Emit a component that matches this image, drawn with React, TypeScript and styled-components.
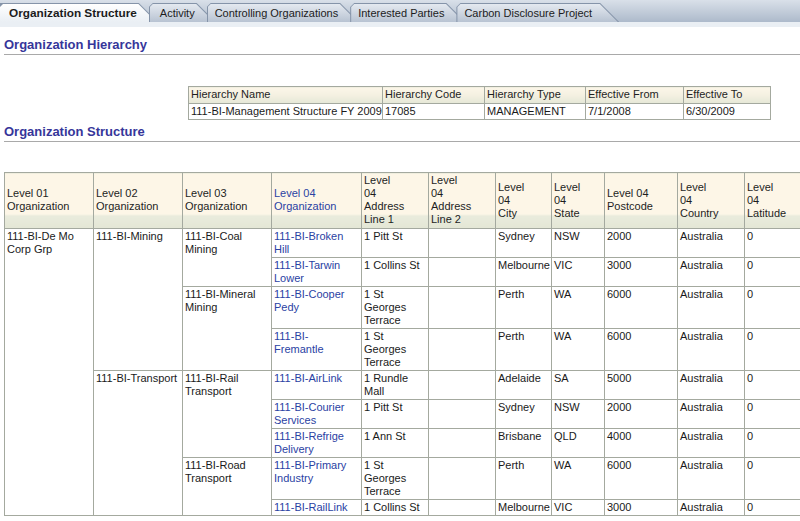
import React from 'react';
import styled, { createGlobalStyle } from 'styled-components';

const GlobalStyle = createGlobalStyle`
  html, body {
    margin: 0;
    padding: 0;
    background: #ffffff;
    overflow: hidden;
  }
  body {
    font-family: "Liberation Sans", Arial, sans-serif;
    font-size: 11px;
    color: #1a1a1a;
  }
`;

const TabBar = styled.div`
  display: flex;
  align-items: flex-end;
  height: 22px;
  padding-top: 3px;
  box-sizing: border-box;
  background: linear-gradient(#d9e0e9, #adbacb);
`;

const TabEdge = styled.div<{ $active?: boolean }>`
  position: relative;
  height: 19px;
  margin-right: -9px;
  padding: 1px 1px 0 ${p => (p.$active ? 0 : 1)}px;
  box-sizing: border-box;
  background: #8594a9;
  clip-path: ${p =>
    p.$active
      ? 'polygon(0 0, calc(100% - 19px) 0, 100% 100%, 0 100%)'
      : 'polygon(0 4px, 4px 0, calc(100% - 19px) 0, 100% 100%, 0 100%)'};
`;

const TabFace = styled.div<{ $active?: boolean; $pad: number; $extra: number }>`
  height: 18px;
  line-height: 18px;
  padding: 0 ${p => 20 + p.$extra}px 0 ${p => p.$pad}px;
  white-space: nowrap;
  font-size: ${p => (p.$active ? '11.8px' : '11px')};
  font-weight: ${p => (p.$active ? 700 : 400)};
  color: #1c1c1c;
  background: ${p =>
    p.$active
      ? 'linear-gradient(#ffffff, #eaeff4)'
      : 'linear-gradient(#e4e9f0, #b8c3d2)'};
  clip-path: polygon(0 3px, 3px 0, calc(100% - 18.4px) 0, calc(100% - 0.4px) 100%, 0 100%);
`;

const TabStrip = styled.div`
  height: 5px;
  background: #eaeff4;
`;

const Content = styled.div`
  padding-left: 4px;
`;

const SectionTitle = styled.h2<{ $top: number }>`
  margin: ${p => p.$top}px 0 0;
  padding: 0 0 2px;
  font-size: 13px;
  line-height: 15px;
  font-weight: bold;
  color: #36369a;
  border-bottom: 1px solid #a9a9a9;
`;

const Table = styled.table<{ $width: number; $left?: number; $top: number }>`
  margin: ${p => p.$top}px 0 0 ${p => p.$left || 0}px;
  width: ${p => p.$width}px;
  border-collapse: collapse;
  table-layout: fixed;
`;

const HeadCell = styled.th<{ $link?: boolean; $short?: boolean }>`
  border: 1px solid #a4a99f;
  padding: 1px 2px 2px;
  text-align: left;
  font-weight: normal;
  vertical-align: middle;
  line-height: 13px;
  white-space: pre;
  overflow: hidden;
  color: ${p => (p.$link ? '#2a42a3' : '#1e1e1e')};
  background: ${p =>
    p.$short
      ? 'linear-gradient(#fcf6e8 0, #f5f1e2 45%, #e5e8d7 100%)'
      : 'linear-gradient(#fdf6e7 0, #fdf6e7 calc(100% - 14px), #eaecdd calc(100% - 13px), #e3e6d5 100%)'};
`;

const Cell = styled.td<{ $link?: boolean }>`
  border: 1px solid #a4a99f;
  padding: 1px 2px;
  vertical-align: top;
  line-height: 13px;
  white-space: pre;
  overflow: hidden;
  color: ${p => (p.$link ? '#2a42a3' : '#1a1a1a')};
`;

const tabs = [
  { label: 'Organization Structure', pad: 9, extra: 0 },
  { label: 'Activity', pad: 10, extra: 0 },
  { label: 'Controlling Organizations', pad: 7, extra: 0 },
  { label: 'Interested Parties', pad: 7, extra: 0 },
  { label: 'Carbon Disclosure Project', pad: 7, extra: 6 },
];

const hierCols = [194, 102, 101, 98, 87];
const hierHead = ['Hierarchy Name', 'Hierarchy Code', 'Hierarchy Type', 'Effective From', 'Effective To'];
const hierRow = ['111-BI-Management Structure FY 2009', '17085', 'MANAGEMENT', '7/1/2008', '6/30/2009'];

const structCols = [89, 89, 89, 90, 67, 67, 56, 53, 73, 67, 72];
const structHead = [
  'Level 01\nOrganization',
  'Level 02\nOrganization',
  'Level 03\nOrganization',
  'Level 04\nOrganization',
  'Level\n04\nAddress\nLine 1',
  'Level\n04\nAddress\nLine 2',
  'Level\n04\nCity',
  'Level\n04\nState',
  'Level 04\nPostcode',
  'Level\n04\nCountry',
  'Level\n04\nLatitude',
];

type Site = { org: string; addr: string; city: string; state: string; post: string };
type Branch = { name: string; sites: Site[] };
type Group = { name: string; branches: Branch[] };

const terrace = '1 St\nGeorges\nTerrace';

const groups: Group[] = [
  {
    name: '111-BI-Mining',
    branches: [
      {
        name: '111-BI-Coal\nMining',
        sites: [
          { org: '111-BI-Broken\nHill', addr: '1 Pitt St', city: 'Sydney', state: 'NSW', post: '2000' },
          { org: '111-BI-Tarwin\nLower', addr: '1 Collins St', city: 'Melbourne', state: 'VIC', post: '3000' },
        ],
      },
      {
        name: '111-BI-Mineral\nMining',
        sites: [
          { org: '111-BI-Cooper\nPedy', addr: terrace, city: 'Perth', state: 'WA', post: '6000' },
          { org: '111-BI-\nFremantle', addr: terrace, city: 'Perth', state: 'WA', post: '6000' },
        ],
      },
    ],
  },
  {
    name: '111-BI-Transport',
    branches: [
      {
        name: '111-BI-Rail\nTransport',
        sites: [
          { org: '111-BI-AirLink', addr: '1 Rundle\nMall', city: 'Adelaide', state: 'SA', post: '5000' },
          { org: '111-BI-Courier\nServices', addr: '1 Pitt St', city: 'Sydney', state: 'NSW', post: '2000' },
          { org: '111-BI-Refrige\nDelivery', addr: '1 Ann St', city: 'Brisbane', state: 'QLD', post: '4000' },
        ],
      },
      {
        name: '111-BI-Road\nTransport',
        sites: [
          { org: '111-BI-Primary\nIndustry', addr: terrace, city: 'Perth', state: 'WA', post: '6000' },
          { org: '111-BI-RailLink', addr: '1 Collins St', city: 'Melbourne', state: 'VIC', post: '3000' },
        ],
      },
    ],
  },
];

const totalSites = groups.reduce(
  (n, g) => n + g.branches.reduce((m, b) => m + b.sites.length, 0),
  0
);

function StructureRows() {
  const rows: React.ReactNode[] = [];
  groups.forEach((g, gi) => {
    const groupSpan = g.branches.reduce((m, b) => m + b.sites.length, 0);
    g.branches.forEach((b, bi) => {
      b.sites.forEach((s, si) => {
        const first = rows.length === 0;
        rows.push(
          <tr key={`${gi}-${bi}-${si}`}>
            {first && <Cell rowSpan={totalSites}>{'111-BI-De Mo\nCorp Grp'}</Cell>}
            {bi === 0 && si === 0 && <Cell rowSpan={groupSpan}>{g.name}</Cell>}
            {si === 0 && <Cell rowSpan={b.sites.length}>{b.name}</Cell>}
            <Cell $link>{s.org}</Cell>
            <Cell>{s.addr}</Cell>
            <Cell />
            <Cell>{s.city}</Cell>
            <Cell>{s.state}</Cell>
            <Cell>{s.post}</Cell>
            <Cell>Australia</Cell>
            <Cell>0</Cell>
          </tr>
        );
      });
    });
  });
  return <>{rows}</>;
}

export default function App() {
  return (
    <>
      <GlobalStyle />
      <TabBar>
        {tabs.map((t, i) => (
          <TabEdge key={t.label} $active={i === 0}>
            <TabFace $active={i === 0} $pad={t.pad} $extra={t.extra}>
              {t.label}
            </TabFace>
          </TabEdge>
        ))}
      </TabBar>
      <TabStrip />
      <Content>
        <SectionTitle $top={10}>Organization Hierarchy</SectionTitle>
        <Table $width={583} $left={184} $top={31}>
          <colgroup>
            {hierCols.map((w, i) => (
              <col key={i} style={{ width: w }} />
            ))}
          </colgroup>
          <thead>
            <tr>
              {hierHead.map(h => (
                <HeadCell key={h} $short>
                  {h}
                </HeadCell>
              ))}
            </tr>
          </thead>
          <tbody>
            <tr>
              {hierRow.map(v => (
                <Cell key={v}>{v}</Cell>
              ))}
            </tr>
          </tbody>
        </Table>
        <SectionTitle $top={4}>Organization Structure</SectionTitle>
        <Table $width={813} $top={30}>
          <colgroup>
            {structCols.map((w, i) => (
              <col key={i} style={{ width: w }} />
            ))}
          </colgroup>
          <thead>
            <tr>
              {structHead.map((h, i) => (
                <HeadCell key={h} $link={i === 3}>
                  {h}
                </HeadCell>
              ))}
            </tr>
          </thead>
          <tbody>
            <StructureRows />
          </tbody>
        </Table>
      </Content>
    </>
  );
}
